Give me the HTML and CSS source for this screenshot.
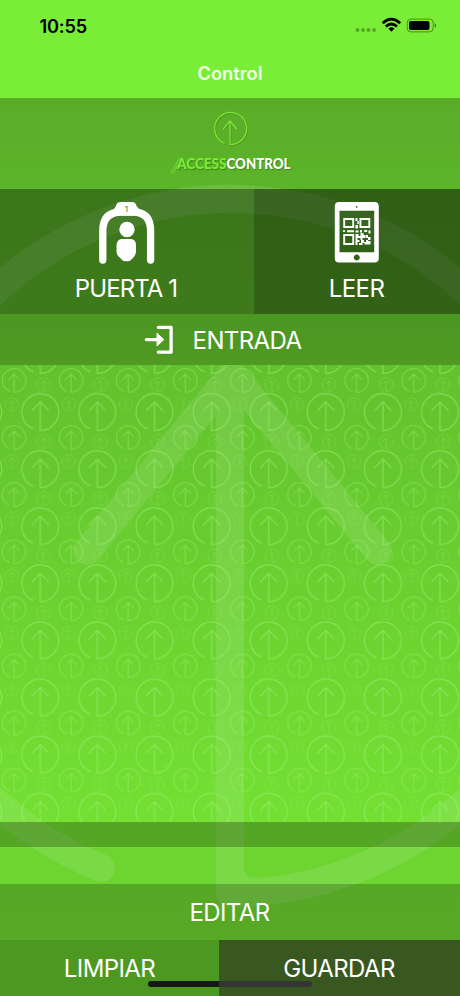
FILE: index.html
```html
<!DOCTYPE html>
<html lang="es">
<head>
<meta charset="utf-8">
<title>Control</title>
<link rel="stylesheet" href="styles.css">
</head>
<body>
<div class="screen">
  <svg class="watermark" viewBox="0 0 460 996">
    <path fill="none" stroke="#c8ecbc" stroke-opacity=".16" stroke-width="28" stroke-linecap="round" stroke-linejoin="round" d="M101 868A347 347 0 1 1 230 893V375M87 551L232 374L378 551"/>
    <path fill="#c8ecbc" fill-opacity=".16" d="M244 868Q245 878 255 879L244 879.2Z"/>
  </svg>
  <header class="top">
    <div class="status">
      <span class="time">10:55</span>
      <svg class="status-icons" width="84" height="20" viewBox="0 0 84 20">
        <g fill="#000" opacity=".3"><circle cx="3.5" cy="14" r="1.9"/><circle cx="9" cy="14" r="1.9"/><circle cx="14.5" cy="14" r="1.9"/><circle cx="20" cy="14" r="1.9"/></g>
        <g fill="none" stroke="#000" stroke-width="2.7"><path d="M28.6 7.2Q37.4-.8 46.2 7.2"/><path d="M31.8 10.4Q37.4 5.6 43 10.4"/></g>
        <path d="M34.3 12.5Q37.4 10.2 40.5 12.5L37.4 15.7Z"/>
        <rect x="53.2" y="3.1" width="26" height="12.8" rx="3.8" fill="none" stroke="#000" stroke-opacity=".4"/>
        <rect x="55" y="5" width="20.5" height="9" rx="2"/>
        <path d="M80.6 7.3q1.6 .6 1.6 2.2t-1.6 2.2z" opacity=".45"/>
      </svg>
    </div>
    <h1>Control</h1>
  </header>
  <div class="brand">
    <svg width="140" height="70" viewBox="160 108 140 70">
      <g fill="none" stroke-width="1.2" stroke-linecap="round" stroke-linejoin="round">
        <path stroke="#31791a" stroke-opacity=".4" transform="translate(.8 .8)" d="M224.3 143.2A16 16 0 1 1 230 144.5V121M223.3 129L230 121L236.8 129"/>
        <path stroke="#7fe637" d="M224.3 143.2A16 16 0 1 1 230 144.5V121M223.3 129L230 121L236.8 129"/>
        <path stroke="#7fe637" stroke-width=".8" d="M170.5 173.5L179 159M173 173.5L178 164.5"/>
      </g>
      <g class="logo-text"><text x="177" y="168.8" textLength="49.5" lengthAdjust="spacingAndGlyphs" fill="#7deb35">ACCESS</text><text x="226.5" y="168.8" textLength="64" lengthAdjust="spacingAndGlyphs" fill="#fff">CONTROL</text></g>
    </svg>
  </div>
  <div class="actions">
    <div class="door">
      <svg width="58" height="64" viewBox="98 201 58 64">
        <path d="M102.8 260V231Q102.8 212 121 212H133Q150.6 212 150.6 231V260" fill="none" stroke="#fff" stroke-width="7.3" stroke-linecap="round"/>
        <path d="M121 202H131.5Q136 202 136.5 206L139 209V215.5H114V209L116 206Q116.5 202 121 202Z" fill="#fff"/>
        <circle cx="127" cy="229.5" r="7.7" fill="#fff"/>
        <path d="M121 239H131.5Q136 240 136 245V251.5Q135.6 256 132.5 258.5Q130.5 261.3 127 261.3H125.5Q122.5 261.3 120.5 258.3Q116.8 256 116.5 251.5V245Q117 240 121 239Z" fill="#fff"/>
        <text x="126.3" y="212" text-anchor="middle" class="door-number">1</text>
      </svg>
      <span>PUERTA 1</span>
    </div>
    <div class="read">
      <svg width="46" height="64" viewBox="334 201 46 64">
        <path fill="#fff" fill-rule="evenodd" d="M339 202H374.5Q378.8 202 378.8 206.3V258.3Q378.8 262.6 374.5 262.6H339Q334.8 262.6 334.8 258.3V206.3Q334.8 202 339 202ZM339.5 210.8V252.2H374.2V210.8ZM356.7 254.6A3 3 0 1 0 356.8 254.6Z"/>
        <circle cx="356.7" cy="206.8" r=".9" fill="#316317"/>
        <g fill="none" stroke="#fff" stroke-width="1.9"><path d="M344.2 219H353.2V227H344.2ZM360.4 219H369.3V227H360.4ZM344.2 235H353.2V244H344.2Z"/></g>
        <g fill="#fff">
          <path d="M355.5 218h2v3h-2zM357.3 221h1.5v3h-1.5zM355.5 225h2.5v3.5h-2.5zM343 230.2h2v1.8h-2zM347 230.2h7v2h-7zM355.5 230.5h3v2h-3zM360 230h2v2.5h-2zM364.2 230h3v2h-3zM368.5 230.5h2v3h-2z"/>
          <path d="M355.5 234h3v2h2v-3h3v2h2v3h-3v2h-2v-2h-3v2h2v2h-2v3h-2zM366 235h2v2h2.5v3H368v-2h-2zM361 240h3v2h2v-2h2v1h2.5v3.5h-6V243h-2v2H359v-2h2z"/>
        </g>
      </svg>
      <span>LEER</span>
    </div>
  </div>
  <div class="entry">
    <svg width="30" height="31" viewBox="145 324 30 31" fill="none" stroke="#fff" stroke-linecap="round" stroke-linejoin="round">
      <path stroke-width="3.3" d="M159.4 327.4H172.1V352.2H159.4"/>
      <path stroke-width="3.3" d="M147.4 339.6H159"/>
      <path fill="#fff" stroke-width="1" d="M158.3 333.5L164.8 339.6L158.3 345.7Z"/>
    </svg>
    <span>ENTRADA</span>
  </div>
  <main class="content">
    <svg width="460" height="457" viewBox="0 365 460 457">
      <defs>
        <path id="mark" d="M-7.5 16.8A18.4 18.4 0 1 1 0 18.4V-9.5M-8.2-1.5L0-10L8.2-1.5" fill="none" stroke-linecap="round"/>
        <pattern id="marks" x="0" y="375" width="57.1" height="57.1" patternUnits="userSpaceOnUse" stroke="#a2f27d">
          <use href="#mark" x="40.3" y="37" stroke-width="1.2" stroke-opacity=".5"/>
          <use href="#mark" x="-16.8" y="37" stroke-width="1.2" stroke-opacity=".5"/>
          <use href="#mark" transform="translate(14 5.4) scale(.64)" stroke-width="1.6" stroke-opacity=".42"/>
          <use href="#mark" transform="translate(14 62.5) scale(.64)" stroke-width="1.6" stroke-opacity=".42"/>
          <use href="#mark" transform="translate(43.4 9.5) scale(.37)" stroke-width="2.5" stroke-opacity=".26"/>
          <use href="#mark" transform="translate(11.5 29.5) scale(.36)" stroke-width="2.5" stroke-opacity=".22"/>
        </pattern>
      </defs>
      <rect y="365" width="460" height="457" fill="url(#marks)"/>
    </svg>
  </main>
  <div class="strip"></div>
  <div class="gap"></div>
  <div class="edit">EDITAR</div>
  <footer class="bottom">
    <div class="clear">LIMPIAR</div>
    <div class="save">GUARDAR</div>
    <i class="home"></i>
  </footer>
</div>
</body>
</html>
```
FILE: styles.css
```css
* { box-sizing: border-box; }
body { margin: 0; }
.screen {
  position: relative;
  z-index: 0;
  width: 460px;
  height: 996px;
  overflow: hidden;
  display: flex;
  flex-direction: column;
  font: 400 24px/30px Inter, sans-serif;
  letter-spacing: -.6px;
  color: #fff;
  background: linear-gradient(#5aac28 98px, #5bb529 189px, #5eba2a 314px, #63c12d 365px, #73e032 822px, #73e032 847px, #6dd430 848px, #6dd630 996px);
}
svg { display: block; }
.watermark { position: absolute; inset: 0; z-index: -1; }
.top { height: 98px; background: #7aed37; }
.status { height: 51px; padding: 0 22px 0 39.5px; display: flex; justify-content: space-between; align-items: center; }
.time { color: #000; font-size: 18.2px; font-weight: 600; letter-spacing: -.2px; }
h1 { margin: 7px 0 0; font-size: 18.3px; line-height: 30px; font-weight: 600; letter-spacing: 0; text-align: center; color: #f2ffe8; }
.brand { height: 91px; padding-top: 10px; display: flex; justify-content: center; }
.logo-text { font: 900 14.5px Lato, sans-serif; letter-spacing: 0; text-shadow: 1px 1px 1px rgba(40, 100, 20, .6); }
.actions { height: 125px; display: flex; }
.door, .read { display: flex; flex-direction: column; align-items: center; padding-top: 12px; gap: 9px; }
.door { width: 254px; background: rgba(0, 0, 0, .34); }
.door span { letter-spacing: -.9px; padding-right: 2px; }
.read { flex: 1; background: rgba(0, 0, 0, .47); }
.read span { padding-right: 1px; }
.door-number { font: 8px Inter, sans-serif; letter-spacing: 0; fill: #426f2b; }
.entry { height: 51px; display: flex; align-items: center; justify-content: center; gap: 19px; padding-right: 15px; background: linear-gradient(#4c9622, #4f9a22); }
.entry span { padding-top: 2px; }
.content { height: 457px; }
.strip { height: 25px; background: rgba(0, 0, 0, .26); }
.gap { height: 37px; }
.edit { height: 56px; padding: 2px 1px 0 0; display: flex; align-items: center; justify-content: center; background: rgba(0, 0, 0, .21); }
.bottom { position: relative; height: 56px; display: flex; }
.clear, .save { display: flex; align-items: center; justify-content: center; padding-top: 2px; }
.clear { width: 219px; background: #4d9821; }
.save { flex: 1; padding-right: 1px; background: #395720; }
.home { position: absolute; left: 148px; top: 41px; width: 164px; height: 6px; border-radius: 3px; background: linear-gradient(90deg, #151815 43%, #343634 43%); }
```
